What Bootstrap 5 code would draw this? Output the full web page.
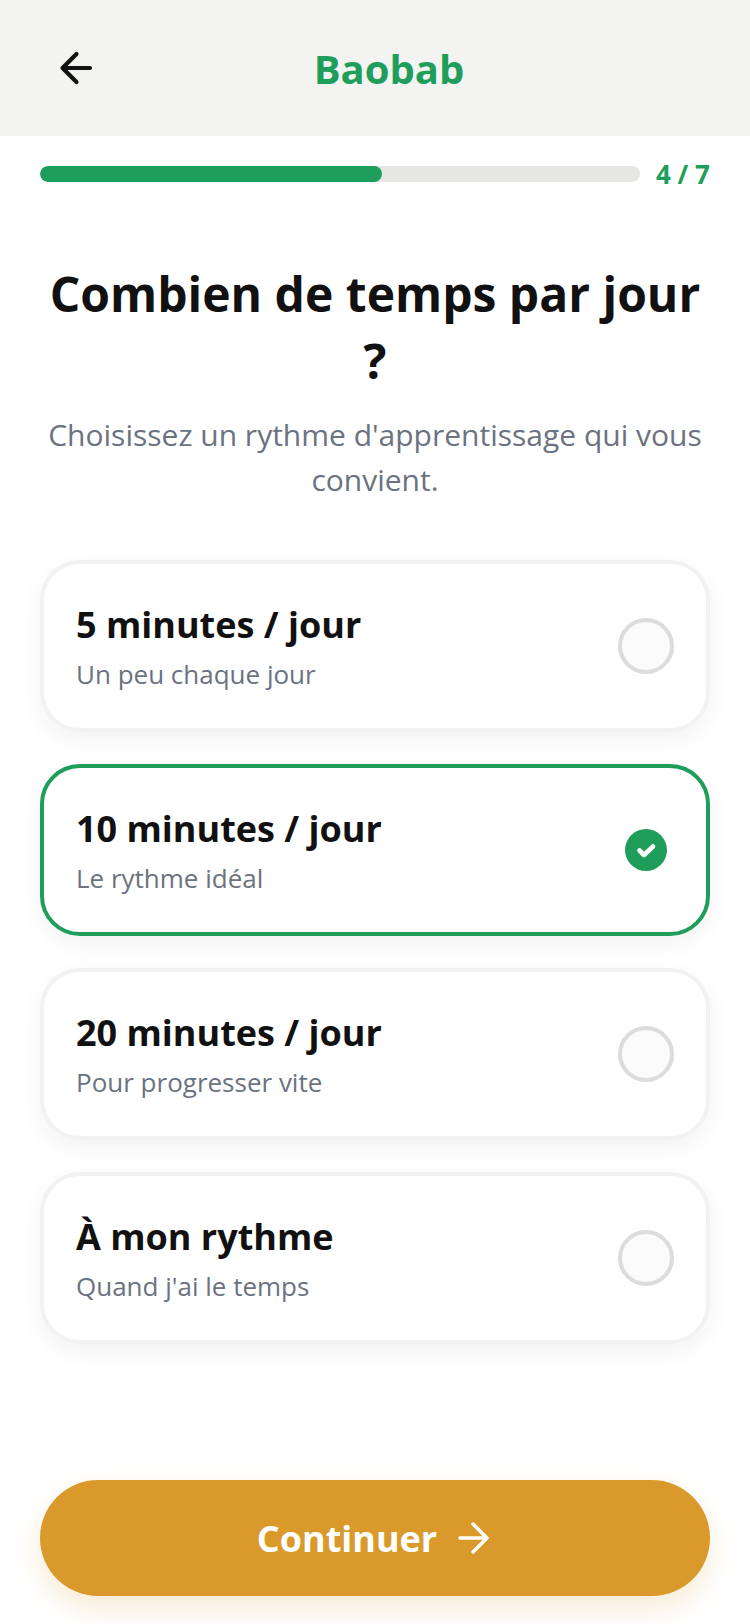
<!DOCTYPE html>
<html lang="fr">
<head>
<meta charset="utf-8">
<title>Baobab</title>
<link href="https://cdn.jsdelivr.net/npm/bootstrap@5.3.0/dist/css/bootstrap.min.css" rel="stylesheet">
<style>
html,body{height:100%}
body{width:750px;height:1624px;overflow:hidden;background:#fff;font-family:"Open Sans","Noto Sans",sans-serif;color:#111}
.shell{height:1624px}
.topbar{height:136px;background:#f3f3f2;padding:2px 0 0 28px;position:relative}
.arrow-back{left:58px;top:50px}
.brand-name{font-size:40px;font-weight:700;color:#1e9e5a;line-height:52px}
.prog-row{padding:30px 40px 0;height:66px}
.prog-track{height:16px;background:#e6e6e5;border-radius:8px;overflow:hidden}
.prog-fill{height:16px;background:#1e9e5a;border-radius:8px}
.prog-txt{font-size:26px;font-weight:700;color:#1e9e5a;line-height:16px;margin-left:16px;width:54px;white-space:nowrap}
.headline{font-size:48px;font-weight:700;line-height:67px;margin:58px 40px 0;color:#111}
.subline{font-size:30px;line-height:45px;color:#6b7280;margin:18px 40px 0}
.opts{padding:0 40px;margin-top:58px;gap:32px}
.opt{height:172px;border:4px solid #f2f2f1;border-radius:40px;background:#fff;box-shadow:0 8px 24px rgba(0,0,0,.05);padding:0 32px}
.opt-on{border-color:#1e9e5a}
.opt-t{font-size:36px;font-weight:700;line-height:50px;color:#111}
.opt-s{font-size:26px;line-height:36px;color:#6b7280;margin-top:6px}
.radio-off{width:56px;height:56px;border:4px solid #dcdcdc;border-radius:50%;background:#fbfbfb}
.radio-slot{width:56px;height:56px}
.radio-on{width:42px;height:42px;border-radius:50%;background:#1e9e5a}
.foot{position:absolute;left:40px;right:40px;top:1480px}
.go{height:116px;width:670px;border-radius:58px;background:#d99a2b;border:0;color:#fff;font-size:36px;font-weight:700;box-shadow:0 12px 28px rgba(217,154,43,.2);gap:20px;padding-top:7px}
.go svg{margin-top:-2px}
</style>
</head>
<body>
<div class="shell position-relative">
  <div class="topbar d-flex align-items-center justify-content-center">
    <svg class="position-absolute arrow-back" width="36" height="36" viewBox="0 0 36 36" fill="none" stroke="#111" stroke-width="4.2" stroke-linecap="round" stroke-linejoin="round"><path d="M32 18H4.5M18.500 4 4.500 18l14 14"/></svg>
    <div class="brand-name">Baobab</div>
  </div>
  <div class="prog-row d-flex align-items-start">
    <div class="prog-track flex-grow-1"><div class="prog-fill" style="width:57%"></div></div>
    <div class="prog-txt">4 / 7</div>
  </div>
  <h1 class="headline text-center">Combien de temps par jour ?</h1>
  <p class="subline text-center">Choisissez un rythme d'apprentissage qui vous convient.</p>
  <div class="opts d-flex flex-column">
    <div class="opt d-flex align-items-center justify-content-between">
      <div><div class="opt-t">5 minutes / jour</div><div class="opt-s">Un peu chaque jour</div></div>
      <div class="radio-off"></div>
    </div>
    <div class="opt opt-on d-flex align-items-center justify-content-between">
      <div><div class="opt-t">10 minutes / jour</div><div class="opt-s">Le rythme idéal</div></div>
      <div class="radio-slot d-flex align-items-center justify-content-center"><div class="radio-on d-flex align-items-center justify-content-center"><svg width="22" height="22" viewBox="0 0 22 22" fill="none" stroke="#fff" stroke-width="4.6" stroke-linecap="round" stroke-linejoin="round"><path d="M4.500 11.500l4.500 4.500 9-8.500"/></svg></div></div>
    </div>
    <div class="opt d-flex align-items-center justify-content-between">
      <div><div class="opt-t">20 minutes / jour</div><div class="opt-s">Pour progresser vite</div></div>
      <div class="radio-off"></div>
    </div>
    <div class="opt d-flex align-items-center justify-content-between">
      <div><div class="opt-t">À mon rythme</div><div class="opt-s">Quand j'ai le temps</div></div>
      <div class="radio-off"></div>
    </div>
  </div>
  <div class="foot">
    <button class="btn go d-flex align-items-center justify-content-center"><span>Continuer</span><svg width="36" height="36" viewBox="0 0 36 36" fill="none" stroke="#fff" stroke-width="3.5" stroke-linecap="round" stroke-linejoin="round"><path d="M3 18h27M16 4l14 14-14 14"/></svg></button>
  </div>
</div>
</body>
</html>
